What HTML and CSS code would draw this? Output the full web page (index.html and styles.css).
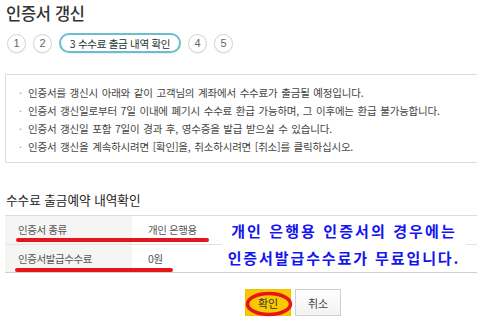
FILE: index.html
```html
<!DOCTYPE html>
<html lang="ko">
<head>
<meta charset="utf-8">
<link rel="stylesheet" href="styles.css">
</head>
<body>
<div class="page">
  <h1 class="title">인증서 갱신</h1>
  <div class="steps">
    <span class="step">1</span>
    <span class="step">2</span>
    <span class="step step-on">3 수수료 출금 내역 확인</span>
    <span class="step">4</span>
    <span class="step">5</span>
  </div>
  <ul class="notice">
    <li>인증서를 갱신시 아래와 같이 고객님의 계좌에서 수수료가 출금될 예정입니다.</li>
    <li>인증서 갱신일로부터 7일 이내에 폐기시 수수료 환급 가능하며, 그 이후에는 환급 불가능합니다.</li>
    <li>인증서 갱신일 포함 7일이 경과 후, 영수증을 발급 받으실 수 있습니다.</li>
    <li>인증서 갱신을 계속하시려면 [확인]을, 취소하시려면 [취소]를 클릭하십시오.</li>
  </ul>
  <h2 class="subtitle">수수료 출금예약 내역확인</h2>
  <div class="table-wrap">
    <div class="row">
      <div class="th">인증서 종류</div>
      <div class="td">개인 은행용</div>
    </div>
    <div class="row">
      <div class="th">인증서발급수수료</div>
      <div class="td">0원</div>
    </div>
    <span class="mark mark-1"></span>
    <span class="mark mark-2"></span>
    <div class="note">
      <p class="note-l1">개인 은행용 인증서의 경우에는</p>
      <p class="note-l2">인증서발급수수료가 무료입니다.</p>
    </div>
  </div>
  <div class="buttons">
    <span class="btn-wrap">
      <button class="btn btn-ok">확인</button>
      <svg class="circle" width="48" height="26" viewBox="0 0 48 26"><ellipse cx="24" cy="13" rx="21.5" ry="10.5" fill="none" stroke="#e8141c" stroke-width="3.5"/></svg>
    </span>
    <button class="btn btn-cancel">취소</button>
  </div>
</div>
</body>
</html>
```
FILE: styles.css
```css
* { box-sizing: border-box; }
html, body { margin: 0; padding: 0; background: #fff; }
body {
  font-family: "Noto Sans CJK KR", "Noto Sans", sans-serif;
  color: #444;
  width: 477px;
  height: 318px;
  overflow: hidden;
}
.page { padding: 1px 0 0 5px; }
.title {
  margin: 0 0 0 1px;
  font-size: 16.5px;
  line-height: 24px;
  font-weight: 500;
  color: #333;
  letter-spacing: -0.3px;
}
.steps {
  display: flex;
  align-items: center;
  gap: 7px;
  margin: 8px 0 0 2px;
  height: 20px;
}
.step {
  width: 19px;
  height: 19px;
  border: 1px solid #d3d3d3;
  border-radius: 50%;
  box-shadow: 0 1px 1px rgba(0,0,0,0.08);
  display: flex;
  align-items: center;
  justify-content: center;
  font-family: "Liberation Sans", sans-serif;
  font-size: 11px;
  color: #666;
}
.step-on {
  width: 122px;
  height: 20px;
  border: 2px solid #6bbdd0;
  border-radius: 10px;
  color: #233;
  font-family: "Noto Sans CJK KR", sans-serif;
  font-size: 10.5px;
  letter-spacing: -0.3px;
}
.notice {
  list-style: none;
  margin: 21px 0 0 0;
  padding: 9px 0 6px 13px;
  border: 1px solid #dcdcdc;
  border-right: none;
  font-size: 10.5px;
  line-height: 18px;
  color: #444;
  letter-spacing: -0.2px;
  word-spacing: 1px;
}
.notice li { position: relative; padding-left: 9px; white-space: nowrap; }
.notice li::before {
  content: "·";
  position: absolute;
  left: 0;
  color: #999;
}
.subtitle {
  margin: 29px 0 0 1px;
  font-size: 12.6px;
  line-height: 16px;
  font-weight: 400;
  color: #222;
}
.table-wrap {
  position: relative;
  margin-top: 7px;
  border-top: 1px solid #dcdcdc;
  border-bottom: 1px solid #cfcfcf;
}
.row {
  display: flex;
  height: 28px;
}
.row + .row { border-top: 1px solid #e3e3e3; }
.th {
  flex: 0 0 127px;
  background: #f5f5f3;
  padding-left: 13px;
  font-size: 10.5px;
  line-height: 28px;
  color: #555;
  letter-spacing: -0.4px;
}
.td {
  flex: 1 1 auto;
  padding-left: 16px;
  font-size: 10.5px;
  line-height: 28px;
  color: #555;
  letter-spacing: -0.4px;
}
.mark {
  position: absolute;
  height: 4px;
  border-radius: 2px;
  background: #e8141c;
}
.mark-1 { left: 11px; width: 193px; top: 22px; }
.mark-2 { left: 10px; width: 158px; top: 52px; }
.note {
  position: absolute;
  left: 217px;
  top: 1px;
  width: 244px;
  height: 54px;
  background: #fff;
  color: #1414f0;
  font-weight: 700;
  font-size: 15px;
  text-align: center;
}
.note p { margin: 0; line-height: 27px; white-space: nowrap; }
.note-l1 { letter-spacing: 2.1px; }
.note-l2 { letter-spacing: 1.9px; }
.buttons {
  display: flex;
  gap: 4px;
  margin: 16px 0 0 240px;
}
.btn-wrap { position: relative; display: inline-flex; }
.btn {
  height: 27px;
  width: 46px;
  font-family: "Noto Sans CJK KR", sans-serif;
  font-size: 11px;
  padding: 0;
  border-radius: 0;
}
.btn-ok {
  background: #f9c800;
  border: 1px solid #f0bf00;
  color: #333;
}
.btn-cancel {
  background: linear-gradient(#fff, #f2f2f2);
  border: 1px solid #cfcfcf;
  color: #444;
}
.circle {
  position: absolute;
  left: 0;
  top: 2px;
  pointer-events: none;
}
```
